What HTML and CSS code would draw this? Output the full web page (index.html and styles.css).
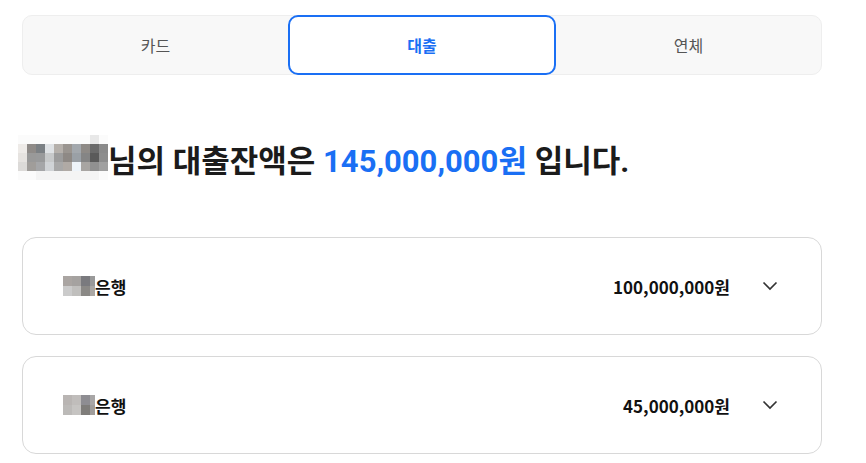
FILE: index.html
```html
<!DOCTYPE html>
<html lang="ko">
<head>
    <meta charset="UTF-8">
    <meta name="viewport" content="width=device-width, initial-scale=1.0">
    <title>대출잔액</title>
    <link rel="stylesheet" href="styles.css">
</head>
<body>
    <div class="pagina">
        <div class="abas">
            <div class="aba">카드</div>
            <div class="aba ativa">대출</div>
            <div class="aba">연체</div>
        </div>

        <h1 class="titulo">
            <span class="mosaico nome">
                <i class="c0"></i><i class="c0"></i><i class="c0"></i><i class="c0"></i><i class="c0"></i><i class="c0"></i><i class="c0"></i><i class="c0"></i><i class="c9"></i><i class="c0"></i>
                <i class="a1"></i><i class="a2"></i><i class="a3"></i><i class="a4"></i><i class="a5"></i><i class="a6"></i><i class="a7"></i><i class="a8"></i><i class="a9"></i><i class="a10"></i>
                <i class="b1"></i><i class="b2"></i><i class="b3"></i><i class="b4"></i><i class="b5"></i><i class="b6"></i><i class="b7"></i><i class="b8"></i><i class="b9"></i><i class="b10"></i>
                <i class="d1"></i><i class="d2"></i><i class="d3"></i><i class="d4"></i><i class="d5"></i><i class="d6"></i><i class="d7"></i><i class="d8"></i><i class="d9"></i><i class="d10"></i>
                <i class="c0"></i><i class="c0"></i><i class="c8"></i><i class="c8"></i><i class="c8"></i><i class="c8"></i><i class="c8"></i><i class="c8"></i><i class="c8"></i><i class="c0"></i>
            </span>
            <span class="titulo-texto">님의 대출잔액은 <span class="valor">145,000,000원</span> 입니다.</span>
        </h1>

        <div class="banco">
            <div class="banco-nome">
                <span class="mosaico sigla">
                    <i class="e1"></i><i class="e2"></i><i class="e3"></i><i class="e4"></i>
                    <i class="e5"></i><i class="e6"></i><i class="e7"></i><i class="e8"></i>
                </span>은행
            </div>
            <div class="banco-valor">100,000,000원</div>
            <svg class="seta" width="16" height="10" viewBox="0 0 16 10"><path d="M1.5 1.5 L8 8 L14.5 1.5" fill="none" stroke="#333" stroke-width="1.7"/></svg>
        </div>

        <div class="banco">
            <div class="banco-nome">
                <span class="mosaico sigla">
                    <i class="f1"></i><i class="f2"></i><i class="f3"></i><i class="f4"></i>
                    <i class="f5"></i><i class="f6"></i><i class="f7"></i><i class="f8"></i>
                </span>은행
            </div>
            <div class="banco-valor">45,000,000원</div>
            <svg class="seta" width="16" height="10" viewBox="0 0 16 10"><path d="M1.5 1.5 L8 8 L14.5 1.5" fill="none" stroke="#333" stroke-width="1.7"/></svg>
        </div>
    </div>
</body>
</html>
```

FILE: styles.css
```css
body {
    margin: 0;
    background: #fff;
    font-family: "Noto Sans CJK KR", "Noto Sans", sans-serif;
    color: #111;
}
.pagina {
    width: 800px;
    padding: 15px 0 0 22px;
}
.abas {
    display: flex;
    height: 60px;
    background-color: #f8f8f8;
    border: 1px solid #eeeeee;
    border-radius: 10px;
    box-sizing: border-box;
}
.aba {
    flex: 1;
    display: flex;
    justify-content: center;
    align-items: center;
    font-size: 16px;
    color: #555;
}
.aba.ativa {
    flex: 0 0 268px;
    box-sizing: border-box;
    margin: -1px 0;
    background-color: #fff;
    border: 2px solid #1a6ff4;
    border-radius: 10px;
    color: #1a6ff4;
    font-weight: bold;
}
.titulo {
    display: flex;
    align-items: center;
    margin: 60px 0 0 -4px;
    height: 45px;
    font-family: Roboto, "Noto Sans CJK KR", sans-serif;
    font-size: 31px;
    font-weight: bold;
    color: #1b1b1b;
}
.titulo-texto {
    white-space: pre;
    margin-top: 2px;
}
.valor {
    color: #1a6ff4;
}
.mosaico {
    display: grid;
}
.mosaico i {
    display: block;
}
.nome {
    grid-template-columns: repeat(10, 9px);
    grid-auto-rows: 9px;
    margin-right: 0;
}
.sigla {
    grid-template-columns: 9px 9px 9px 5px;
    grid-auto-rows: 10px;
    margin-right: 0;
}
.c0 { background: #fbfbfb; }
.c8 { background: #f4f4f4; }
.c9 { background: #e8e8e8; }
.a1 { background: #eeebe8; } .a2 { background: #8f8b88; } .a3 { background: #7b8084; } .a4 { background: #dfe2e5; } .a5 { background: #b5b0ab; }
.a6 { background: #9a9590; } .a7 { background: #a3a8ad; } .a8 { background: #8e8a86; } .a9 { background: #6a6a6a; } .a10 { background: #8a8a8a; }
.b1 { background: #e6e3e0; } .b2 { background: #999999; } .b3 { background: #999a9b; } .b4 { background: #c7c9ca; } .b5 { background: #9c9c9c; }
.b6 { background: #8e8985; } .b7 { background: #9aa0a6; } .b8 { background: #858585; } .b9 { background: #5a5a5a; } .b10 { background: #8d8d8d; }
.d1 { background: #dcdad8; } .d2 { background: #a09d9a; } .d3 { background: #a5a6a8; } .d4 { background: #d0d3d6; } .d5 { background: #a8a8a8; }
.d6 { background: #b0aaa5; } .d7 { background: #eef4fa; } .d8 { background: #a8a5a2; } .d9 { background: #909090; } .d10 { background: #a0a0a0; }
.e1 { background: #aaa5a2; } .e2 { background: #a5a2a0; } .e3 { background: #7a7a7e; } .e4 { background: #999999; }
.e5 { background: #cbcbcb; } .e6 { background: #c0bfbd; } .e7 { background: #8b8986; } .e8 { background: #aaa7a4; }
.f1 { background: #b9b5b3; } .f2 { background: #c0bdbb; } .f3 { background: #8e8d92; } .f4 { background: #a8a6a6; }
.f5 { background: #bcbab8; } .f6 { background: #c6c4c2; } .f7 { background: #7f7d7a; } .f8 { background: #a09d9b; }
.banco {
    display: flex;
    align-items: center;
    height: 98px;
    box-sizing: border-box;
    padding: 0 43px 0 40px;
    border: 1px solid #d8d8d8;
    border-radius: 14px;
}
.titulo + .banco {
    margin-top: 57px;
}
.banco + .banco {
    margin-top: 21px;
}
.banco-nome {
    display: flex;
    align-items: center;
    font-size: 17px;
    font-weight: bold;
    color: #111;
}
.banco-valor {
    margin-left: auto;
    margin-right: 32px;
    font-size: 17px;
    font-weight: bold;
    color: #111;
}
.seta {
    display: block;
}
```
